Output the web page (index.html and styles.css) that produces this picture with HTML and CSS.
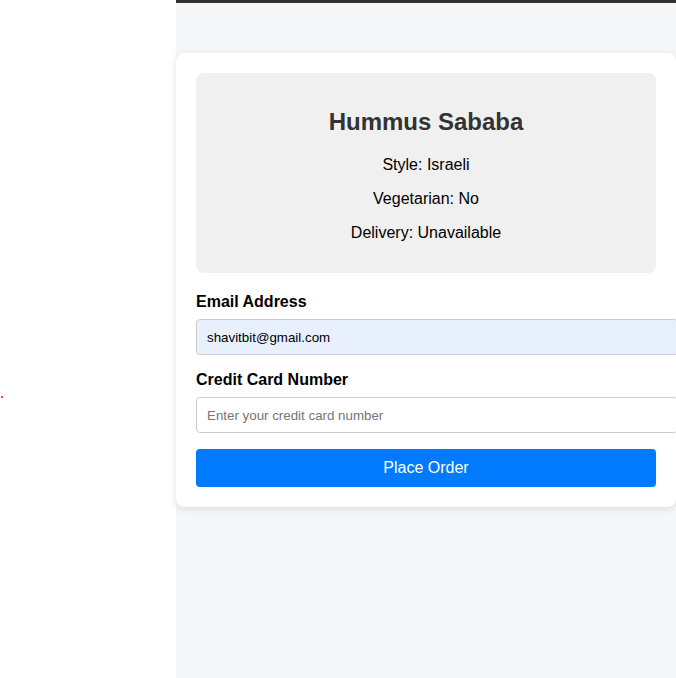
FILE: index.html
```html
<!DOCTYPE html>
<html>
<head>
<meta charset="utf-8">
<link rel="stylesheet" href="styles.css">
</head>
<body>
<div class="layout">
  <aside class="side"><span class="dot"></span></aside>
  <main class="main">
    <div class="topbar"></div>
    <div class="card">
      <div class="info">
        <h2 class="title">Hummus Sababa</h2>
        <p class="line">Style: Israeli</p>
        <p class="line">Vegetarian: No</p>
        <p class="line">Delivery: Unavailable</p>
      </div>
      <label class="label">Email Address</label>
      <input class="field autofill" type="text" value="shavitbit@gmail.com">
      <label class="label">Credit Card Number</label>
      <input class="field" type="text" placeholder="Enter your credit card number">
      <button class="btn">Place Order</button>
    </div>
  </main>
</div>
</body>
</html>
```
FILE: styles.css
```css
html, body { margin: 0; padding: 0; height: 100%; }
body { font-family: "Liberation Sans", Arial, sans-serif; background: #fff; overflow: hidden; }
.layout { display: flex; height: 678px; }
.side { width: 176px; flex: none; background: #fff; display: flex; flex-direction: column; justify-content: flex-start; }
.dot { display: block; width: 2px; height: 2px; background: #e8424f; margin: 396px 0 0 1px; }
.main { flex: 1; background: #f6f7f9; min-width: 0; }
.topbar { height: 3px; background: #333; margin-bottom: 50px; }
.card { background: #fff; border-radius: 8px; box-shadow: 0 2px 8px rgba(0,0,0,0.12); padding: 20px; width: 460px; }
.info { background: #f0f0f0; border-radius: 8px; padding: 15px; text-align: center; margin-bottom: 20px; }
.title { font-size: 24px; color: #333; margin: 20px 0; line-height: 28px; }
.line { font-size: 16px; margin: 16px 0; line-height: 18px; color: #000; }
.label { display: block; font-weight: bold; font-size: 16px; line-height: 18px; margin-bottom: 8px; }
.field { display: block; box-sizing: border-box; width: 482px; height: 36px; padding: 0 10px; border: 1px solid #ccc; border-radius: 4px; font-family: "Liberation Sans", Arial, sans-serif; font-size: 13.33px; margin: 0 0 16px 0; background: #fff; color: #000; }
.field::placeholder { color: #757575; }
.autofill { background: #e8f0fe; }
.btn { display: block; width: 460px; height: 38px; margin-top: 16px; background: #007bff; color: #fff; border: none; border-radius: 4px; font-family: "Liberation Sans", Arial, sans-serif; font-size: 16px; }
```
